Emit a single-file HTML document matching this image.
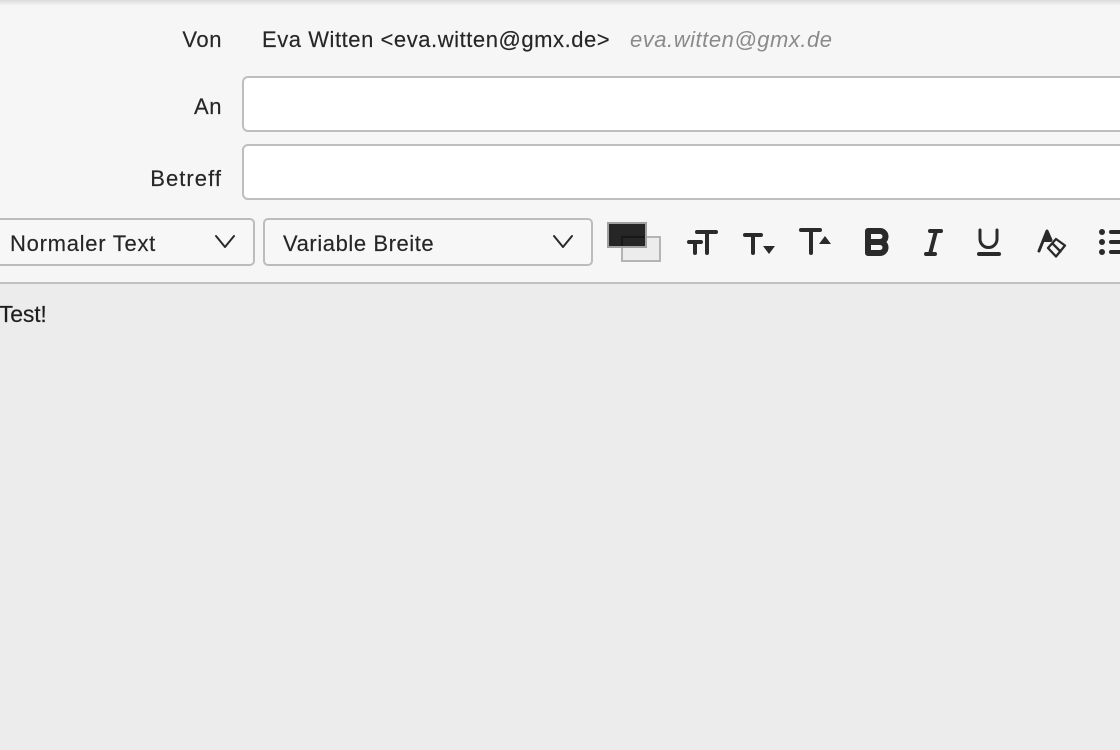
<!DOCTYPE html>
<html><head><meta charset="utf-8">
<style>
html,body{margin:0;padding:0;width:1120px;height:750px;overflow:hidden;background:#ececec}
body{position:relative;font-family:"Liberation Sans",sans-serif;color:#262626}
.top{position:absolute;left:0;top:0;width:1120px;height:282px;background:#f6f6f6}
.sh{position:absolute;left:0;top:0;width:1120px;height:6px;background:linear-gradient(#dcdcdc,#f6f6f6)}
.line{position:absolute;left:0;top:282px;width:1120px;height:2px;background:#c0c0c0}
.t{position:absolute;font-size:22px;line-height:26px;white-space:nowrap;letter-spacing:.55px;-webkit-text-stroke:.15px #262626}
.r{text-align:right;right:898px}
.inp{position:absolute;left:242px;width:900px;height:52px;border:2px solid #bebebe;border-radius:6px;background:#fff}
.sel{position:absolute;top:218px;height:44px;border:2px solid #bcbcbc;border-radius:5px;background:#f7f7f7}
svg{position:absolute;left:0;top:0}
</style></head><body>
<div class="top"></div><div class="sh"></div><div class="line"></div>
<div class="t r" style="top:27px">Von</div>
<div class="t" style="left:262px;top:27px">Eva Witten &lt;eva.witten@gmx.de&gt;</div>
<div class="t" style="left:630px;top:27px;font-style:italic;color:#8a8a8a;-webkit-text-stroke:0;letter-spacing:.53px">eva.witten@gmx.de</div>
<div class="t r" style="top:94px">An</div>
<div class="inp" style="top:76px"></div>
<div class="t r" style="top:166px;letter-spacing:1.05px">Betreff</div>
<div class="inp" style="top:144px"></div>
<div class="sel" style="left:-10px;width:261px"></div>
<div class="t" style="left:10px;top:231px;letter-spacing:.73px">Normaler Text</div>
<div class="sel" style="left:263px;width:326px"></div>
<div class="t" style="left:283px;top:231px;letter-spacing:.57px">Variable Breite</div>
<div class="t" style="left:-1px;top:301px;font-size:23px;letter-spacing:-.2px;color:#1e1e1e">Test!</div>
<svg width="1120" height="750" viewBox="0 0 1120 750" fill="none" stroke-linecap="round" stroke-linejoin="round">
<g stroke="#2a2a2a" stroke-width="2">
<path d="M216 236l9 11 9-11M554 236l9 11 9-11"/>
</g>
<rect x="622" y="237" width="38" height="24" fill="#ececec" stroke="#b4b4b4" stroke-width="2" stroke-linejoin="miter"/>
<rect x="608" y="223" width="38" height="24" fill="#262626" stroke="#a0a0a0" stroke-width="2" stroke-linejoin="miter"/>
<path d="M622 246v-9h23" stroke="#171717" stroke-width="2" stroke-linecap="butt"/>
<g stroke="#2a2a2a" stroke-width="4">
<path d="M697 232h19M707 232v21"/>
<path d="M689 242h12M695 242v11"/>
<path d="M745 235h16M753 235v18"/>
<path d="M801 230h19M811 230v23"/>
<path d="M868 231V253H880a5.500 5.500 0 0 0 0-11H868M868 231H880a5.500 5.500 0 0 1 0 11" stroke-width="6"/>
<path d="M930 231h11M936 231l-6 23M926 254h9"/>
<path d="M980 230v9a8.500 8.500 0 0 0 17 0v-9" stroke-width="3"/>
<path d="M979 254h20" stroke-width="4"/>
<path d="M1039 251l8-20 4 9" stroke-width="3"/>
<path d="M1044 241l4-7 3 7z" fill="#2a2a2a" stroke-width="2"/>
</g>
<path d="M763 246h12l-6 8z M825 236l6 8h-12z" fill="#2a2a2a"/>
<path d="M1048 248l8-9 9 6.500-9 11z M1052.500 243.500l8 8" stroke="#2a2a2a" stroke-width="2.300"/>
<g fill="#2a2a2a">
<circle cx="1102" cy="232" r="3"/><circle cx="1102" cy="242" r="3"/><circle cx="1102" cy="252" r="3"/>
<rect x="1109" y="230" width="14" height="4" rx="2"/><rect x="1109" y="240" width="14" height="4" rx="2"/><rect x="1109" y="250" width="14" height="4" rx="2"/>
</g>
</svg>
</body></html>
